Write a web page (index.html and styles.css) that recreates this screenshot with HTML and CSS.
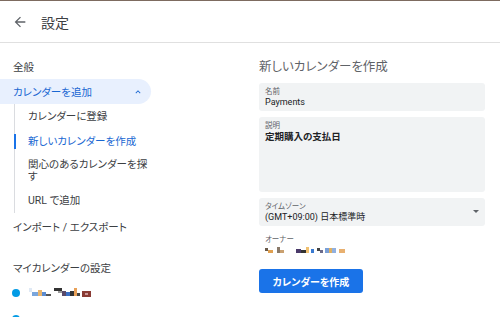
FILE: index.html
```html
<!DOCTYPE html>
<html lang="ja">
<head>
  <meta charset="UTF-8" />
  <meta name="viewport" content="width=device-width, initial-scale=1.0" />
  <title>設定</title>
  <link rel="stylesheet" href="styles.css">
</head>
<body>
  <header>
    <button class="back" aria-label="戻る">
      <svg width="16" height="16" viewBox="0 0 24 24"><path d="M20 11H7.83l5.59-5.59L12 4l-8 8 8 8 1.41-1.41L7.83 13H20v-2z" fill="#5f6368"/></svg>
    </button>
    <h1>設定</h1>
  </header>

  <main>
    <nav class="sidebar">
      <div class="nav-item">全般</div>
      <div class="nav-item open">
        カレンダーを追加
        <svg width="10" height="10" viewBox="0 0 24 24"><path d="M7.41 15.41 12 10.83l4.59 4.58L18 14l-6-6-6 6z" fill="#1967d2"/></svg>
      </div>
      <div class="sub-list">
        <div class="sub-item">カレンダーに登録</div>
        <div class="sub-item active">新しいカレンダーを作成</div>
        <div class="sub-item wrap">関心のあるカレンダーを探す</div>
        <div class="sub-item">URL で追加</div>
      </div>
      <div class="nav-item">インポート / エクスポート</div>
      <div class="nav-item section">マイカレンダーの設定</div>
      <div class="nav-item cal">
        <span class="dot"></span>
        <svg class="blur" width="64" height="10" viewBox="0 0 64 10">
          <rect x="0" y="0" width="3" height="4" fill="#dfe9f5"/>
          <rect x="3" y="4" width="6" height="4" fill="#7aa6dc"/>
          <rect x="9" y="2" width="4" height="6" fill="#e9b56d"/>
          <rect x="13" y="4" width="4" height="4" fill="#5b8bd0"/>
          <rect x="17" y="6" width="5" height="2" fill="#555"/>
          <rect x="25" y="0" width="8" height="3" fill="#333"/>
          <rect x="29" y="3" width="4" height="2" fill="#999"/>
          <rect x="33" y="3" width="4" height="5" fill="#5a4a6a"/>
          <rect x="37" y="4" width="4" height="4" fill="#3a6fc4"/>
          <rect x="41" y="3" width="4" height="5" fill="#333"/>
          <rect x="45" y="0" width="3" height="8" fill="#e9a158"/>
          <rect x="48" y="5" width="3" height="3" fill="#444"/>
          <rect x="53" y="3" width="9" height="6" fill="#8a3b34"/>
          <rect x="56" y="5" width="3" height="2" fill="#c99"/>
        </svg>
      </div>
      <div class="nav-item cal"><span class="dot"></span></div>
    </nav>

    <section class="content">
      <h2>新しいカレンダーを作成</h2>
      <div class="field">
        <label>名前</label>
        <div class="value">Payments</div>
      </div>
      <div class="field tall">
        <label>説明</label>
        <div class="value strong">定期購入の支払日</div>
      </div>
      <div class="field select">
        <label>タイムゾーン</label>
        <div class="value">(GMT+09:00) 日本標準時</div>
        <span class="caret"></span>
      </div>
      <div class="owner">
        <label>オーナー</label>
        <svg class="blur" width="90" height="7" viewBox="0 0 90 7">
          <rect x="0" y="1" width="3" height="3" fill="#6a5a4a"/>
          <rect x="3" y="3" width="5" height="3" fill="#e0a050"/>
          <rect x="12" y="0" width="3" height="6" fill="#8a7a6a"/>
          <rect x="15" y="3" width="4" height="3" fill="#c9a070"/>
          <rect x="31" y="2" width="5" height="4" fill="#4a3a6a"/>
          <rect x="36" y="3" width="5" height="3" fill="#333"/>
          <rect x="41" y="0" width="3" height="6" fill="#f0c070"/>
          <rect x="46" y="2" width="3" height="4" fill="#3a7ad0"/>
          <rect x="52" y="1" width="3" height="3" fill="#444"/>
          <rect x="55" y="3" width="3" height="3" fill="#6a6a8a"/>
          <rect x="60" y="1" width="4" height="5" fill="#7aa0d8"/>
          <rect x="64" y="1" width="3" height="5" fill="#e0b060"/>
          <rect x="67" y="1" width="4" height="5" fill="#90b0e0"/>
          <rect x="74" y="2" width="6" height="4" fill="#e8b070"/>
        </svg>
      </div>
      <button class="create-btn">カレンダーを作成</button>
    </section>
  </main>
</body>
</html>
```

FILE: styles.css
```css
body {
  margin: 0;
  font-family: 'Roboto', 'Noto Sans CJK JP', sans-serif;
  font-feature-settings: 'palt';
  background-color: #fff;
  color: #3c4043;
  border-top: 1px solid #7d6b60;
  height: 316px;
  overflow: hidden;
}
header {
  display: flex;
  align-items: center;
  height: 41px;
  border-bottom: 1px solid #e0e0e0;
}
.back {
  display: flex;
  background: none;
  border: none;
  padding: 0;
  margin: 0 13px 0 12px;
}
h1 {
  margin: 0;
  font-size: 14px;
  font-weight: 400;
  color: #3c4043;
}
main {
  display: flex;
  gap: 108px;
}
.sidebar {
  width: 151px;
  padding-top: 10px;
  font-size: 10.5px;
}
.nav-item {
  display: flex;
  align-items: center;
  justify-content: space-between;
  height: 26px;
  padding: 0 13px;
}
.nav-item.open {
  height: 25px;
  background-color: #e8f0fe;
  color: #1967d2;
  border-radius: 0 13px 13px 0;
  padding-right: 8px;
}
.sub-list {
  margin-left: 14px;
  border-left: 1px solid #dadce0;
}
.sub-item {
  position: relative;
  padding: 6px 0 6px 13px;
  line-height: 13px;
}
.sub-item.wrap {
  padding: 5px 0 5px 13px;
  line-height: 12px;
}
.sub-item.active {
  color: #1967d2;
}
.sub-item.active::before {
  content: '';
  position: absolute;
  left: -1px;
  top: 5px;
  bottom: 5px;
  width: 2px;
  background-color: #1a73e8;
}
.nav-item.section {
  margin-top: 15px;
}
.nav-item.cal {
  justify-content: flex-start;
  gap: 9px;
  padding-left: 12px;
}
.dot {
  width: 8px;
  height: 8px;
  border-radius: 50%;
  background-color: #039be5;
}
.blur {
  display: block;
}
.content {
  width: 226px;
  padding-top: 15px;
}
h2 {
  margin: 0 0 8px;
  font-size: 12.5px;
  font-weight: 400;
  color: #5f6368;
  line-height: 17px;
}
.field {
  position: relative;
  height: 28px;
  padding: 4px 6px 0;
  box-sizing: border-box;
  margin-bottom: 6px;
  background-color: #f1f3f4;
  border-radius: 3px;
}
.field.tall {
  height: 75px;
}
.field label,
.owner label {
  display: block;
  font-size: 7.5px;
  line-height: 9px;
  color: #5f6368;
}
.value {
  font-size: 9px;
  line-height: 13px;
  color: #202124;
}
.value.strong {
  font-size: 9.5px;
  font-weight: 700;
}
.caret {
  position: absolute;
  right: 6px;
  top: 12px;
  border-left: 3px solid transparent;
  border-right: 3px solid transparent;
  border-top: 3px solid #5f6368;
}
.owner {
  padding: 3px 6px 0;
  height: 32px;
  box-sizing: border-box;
}
.owner label {
  margin-bottom: 3px;
}
.create-btn {
  width: 104px;
  height: 24px;
  margin-top: 5px;
  border: none;
  border-radius: 3px;
  background-color: #1a73e8;
  color: #fff;
  font-family: inherit;
  font-feature-settings: 'palt';
  font-size: 10px;
  font-weight: 700;
}
```
